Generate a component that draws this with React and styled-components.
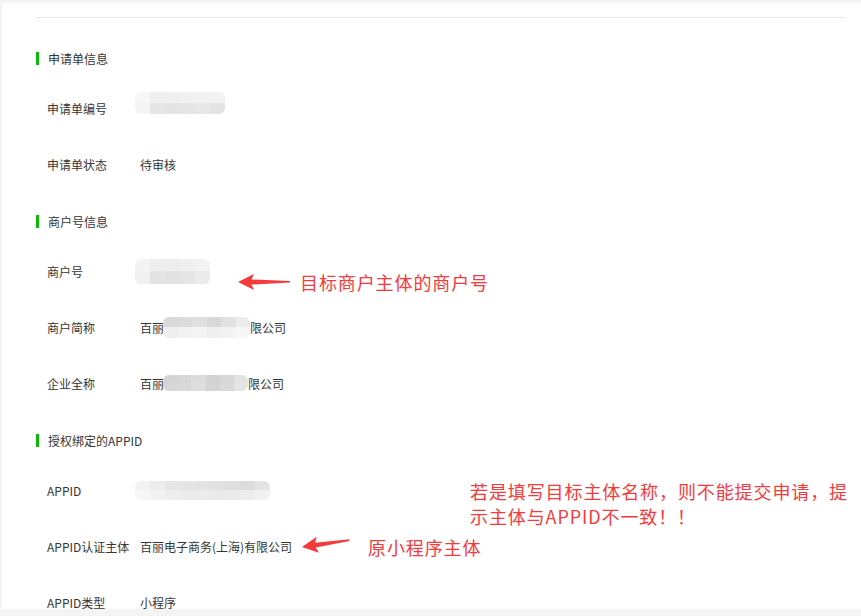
import React from 'react';
import styled, { createGlobalStyle } from 'styled-components';

const GlobalStyle = createGlobalStyle`
  html, body {
    margin: 0;
    padding: 0;
    background: #f4f4f4;
    font-family: 'Noto Sans CJK SC', 'Noto Sans', sans-serif;
  }
`;

const Page = styled.div`
  height: 616px;
  padding: 3px 0 0 2px;
  box-sizing: border-box;
  overflow: hidden;
`;

const Card = styled.div`
  position: relative;
  height: 606px;
  background: #fff;
  padding: 14px 16px 0 34px;
  box-sizing: border-box;
  overflow: hidden;
`;

const Divider = styled.div`
  height: 1px;
  background: #e7e7e7;
`;

const Section = styled.section`
  margin-top: ${(p) => p.gap}px;
`;

const SectionTitle = styled.div`
  display: flex;
  align-items: center;
  height: 13px;
  font-size: 12px;
  color: #353535;
  margin-bottom: 15px;

  &::before {
    content: '';
    width: 3px;
    height: 13px;
    background: #09bb07;
    margin-right: 9px;
  }
`;

const Row = styled.div`
  position: relative;
  display: flex;
  align-items: center;
  height: 56px;
  padding-left: 11px;
  font-size: 12px;
  color: #353535;
`;

const Label = styled.div`
  width: 93px;
  flex-shrink: 0;
  white-space: nowrap;
`;

const Value = styled.div`
  display: flex;
  align-items: center;
  white-space: nowrap;
`;

const Mosaic = styled.div`
  display: grid;
  grid-template-columns: repeat(${(p) => p.cols}, 1fr);
  width: ${(p) => p.w}px;
  height: ${(p) => p.h}px;
  margin-left: ${(p) => p.ml || 0}px;
  margin-bottom: ${(p) => p.mb || 0}px;
  border-radius: 6px;
  overflow: hidden;
  filter: blur(0.7px);
`;

const Cell = styled.span`
  display: block;
  background: ${(p) => p.c};
`;

const Callout = styled.div`
  position: absolute;
  left: ${(p) => p.left}px;
  top: ${(p) => p.top}px;
  display: flex;
  align-items: center;
  gap: ${(p) => p.gap}px;
`;

const Note = styled.div`
  font-size: 18px;
  letter-spacing: 0.9px;
  line-height: ${(p) => p.lh || 24}px;
  color: #f43b3b;
  white-space: nowrap;
`;

const NoteBlock = styled(Note)`
  position: absolute;
  left: ${(p) => p.left}px;
  top: ${(p) => p.top}px;
`;

const Arrow = ({ width, tilt = 0 }) => (
  <svg
    width={width}
    height="18"
    viewBox={`0 0 ${width} 18`}
    style={{ transform: `rotate(${tilt}deg)`, transformOrigin: 'left center' }}
  >
    <path
      d={`M0 9 L16 1 L13.5 6.5 L${width} 8 L${width} 9.6 L13.5 11.5 L16 17 Z`}
      fill="#f43b3b"
    />
  </svg>
);

const Blur = ({ top, bottom, w, h, ml, mb }) => (
  <Mosaic cols={top.length} w={w} h={h} ml={ml} mb={mb}>
    {top.map((c, i) => (
      <Cell key={'t' + i} c={c} />
    ))}
    {bottom.map((c, i) => (
      <Cell key={'b' + i} c={c} />
    ))}
  </Mosaic>
);

const App = () => (
  <Page>
    <GlobalStyle />
    <Card>
      <Divider />

      <Section gap={34}>
        <SectionTitle>申请单信息</SectionTitle>
        <Row>
          <Label>申请单编号</Label>
          <Value>
            <Blur
              w={90}
              h={22}
              ml={-5}
              mb={10}
              top={['#f6f6f6', '#efefef', '#f0f0f0', '#f1f1f1', '#f2f2f2', '#f3f3f3']}
              bottom={['#f4f4f4', '#e6e6e6', '#e4e4e4', '#e5e5e5', '#e7e7e7', '#e4e4e4']}
            />
          </Value>
        </Row>
        <Row>
          <Label>申请单状态</Label>
          <Value>待审核</Value>
        </Row>
      </Section>

      <Section gap={23}>
        <SectionTitle>商户号信息</SectionTitle>
        <Row>
          <Label>商户号</Label>
          <Value>
            <Blur
              w={75}
              h={25}
              ml={-5}
              top={['#f3f3f3', '#efefef', '#eeeeee', '#f0f0f0', '#f3f3f3']}
              bottom={['#f1f1f1', '#e4e4e4', '#e2e2e2', '#e6e6e6', '#ebebeb']}
            />
          </Value>
          <Callout left={202} top={27} gap={10}>
            <Arrow width={52} />
            <Note>目标商户主体的商户号</Note>
          </Callout>
        </Row>
        <Row>
          <Label>商户简称</Label>
          <Value>
            百丽
            <Blur
              w={87}
              h={21}
              ml={-1}
              top={['#d9d9d9', '#dcdcdc', '#e0e0e0', '#d8d8d8', '#e3e1e1', '#ececec']}
              bottom={['#eeeeee', '#f2f2f2', '#f4f4f4', '#efefef', '#f3f3f3', '#f7f7f7']}
            />
            限公司
          </Value>
        </Row>
        <Row>
          <Label>企业全称</Label>
          <Value>
            百丽
            <Blur
              w={85}
              h={16}
              ml={-1}
              top={['#d4d4d4', '#d6d6d6', '#dcdcdc', '#d2d2d2', '#d8d8d8', '#e2e2e2']}
              bottom={['#d6d6d6', '#d9d9d9', '#dedede', '#d4d4d4', '#dadada', '#e4e4e4']}
            />
            限公司
          </Value>
        </Row>
      </Section>

      <Section gap={23}>
        <SectionTitle>授权绑定的APPID</SectionTitle>
        <Row>
          <Label>APPID</Label>
          <Value>
            <Blur
              w={135}
              h={19}
              ml={-5}
              top={['#f3f3f3', '#ececec', '#e6e6e6', '#e4e4e4', '#e3e3e3', '#e1e1e1', '#dfdfdf', '#dcdcdc', '#e4e4e4']}
              bottom={['#f6f6f6', '#f2f2f2', '#eeeeee', '#ebebeb', '#ececec', '#eaeaea', '#ebebeb', '#ededed', '#f1f1f1']}
            />
          </Value>
          <NoteBlock left={434} top={17} lh={25}>
            若是填写目标主体名称，则不能提交申请，提
            <br />
            示主体与APPID不一致！！
          </NoteBlock>
        </Row>
        <Row>
          <Label>APPID认证主体</Label>
          <Value>百丽电子商务(上海)有限公司</Value>
          <Callout left={266} top={17} gap={18}>
            <Arrow width={48} tilt={-8} />
            <Note>原小程序主体</Note>
          </Callout>
        </Row>
        <Row>
          <Label>APPID类型</Label>
          <Value>小程序</Value>
        </Row>
      </Section>
    </Card>
  </Page>
);

export default App;
